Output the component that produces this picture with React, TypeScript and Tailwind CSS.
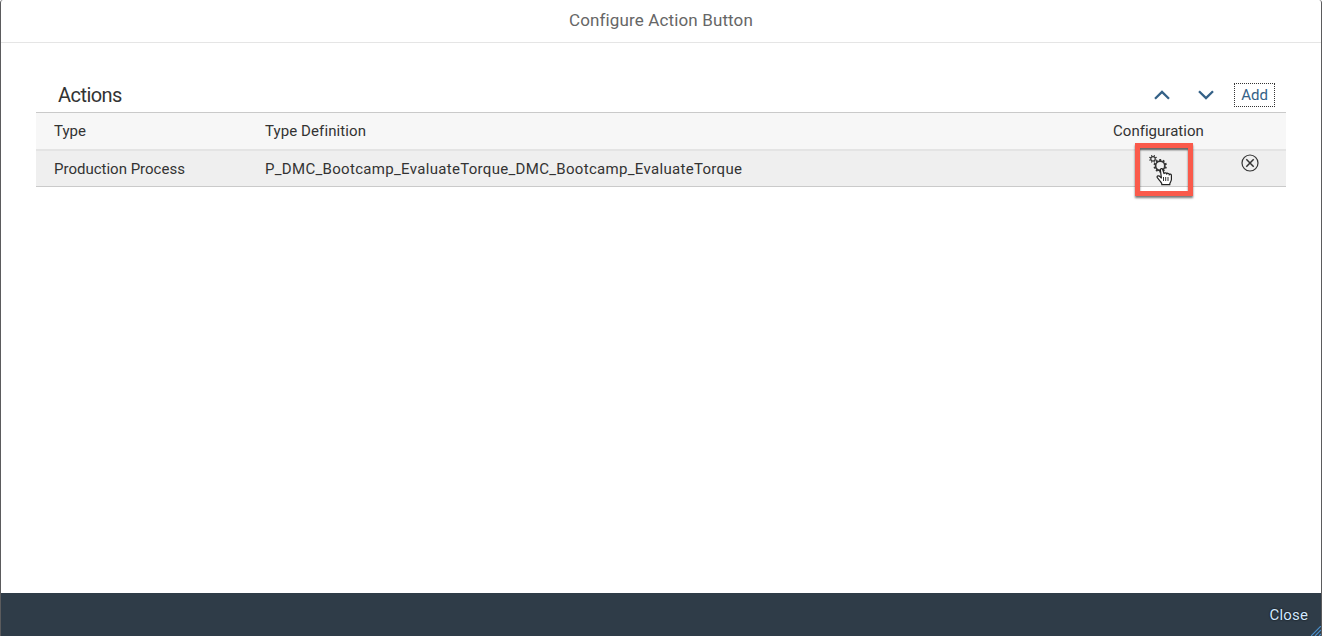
import React from "react";

const columns = "grid grid-cols-[211px_848px_124px_67px]";

function ChevronUp({ flip = false }: { flip?: boolean }) {
  return (
    <svg width="16" height="10" viewBox="0 0 16 10" fill="none" className={flip ? "rotate-180" : ""}>
      <path d="M1 8.7 8 1.9 15 8.7" stroke="#346187" strokeWidth="2.3" />
    </svg>
  );
}

function teeth(cx: number, cy: number, r1: number, r2: number, n: number) {
  const parts: string[] = [];
  for (let i = 0; i < n; i++) {
    const a = ((i + 0.5) / n) * Math.PI * 2;
    parts.push(
      `M${cx + r1 * Math.cos(a)} ${cy + r1 * Math.sin(a)}L${cx + r2 * Math.cos(a)} ${cy + r2 * Math.sin(a)}`
    );
  }
  return parts.join("");
}

function Gears() {
  return (
    <svg width="20" height="22" viewBox="0 0 20 22" fill="none" stroke="#333">
      <circle cx="5" cy="4.8" r="2.2" strokeWidth="1.1" />
      <path d={teeth(5, 4.8, 2.4, 4, 8)} strokeWidth="1.1" />
      <circle cx="12.2" cy="11.8" r="4.6" strokeWidth="1.7" />
      <path d={teeth(12.2, 11.8, 4.8, 6.7, 10)} strokeWidth="1.9" />
    </svg>
  );
}

function HandCursor() {
  return (
    <svg width="17" height="19" viewBox="0 0 17 19">
      <path
        d="M5.4 11 4.2 9.8C3.2 8.8 1.5 8.5 1.1 9.4c-.3.7.2 1.3.8 2l2.6 3.2c.6 1 1.3 1.5 1.3 2.4v.7h8v-.9c.2-1.2 1.5-2.5 1.6-4.3V8.4c0-1.5-2-1.6-2.2-.5V7.3c-.2-1.4-2.3-1.4-2.5-.2V6.700C10.400 5.500 8.200 5.500 8 6.600L6.700 2.500C6.300 1.200 4.200 1.500 4.400 3Z"
        fill="#fff"
        stroke="#222"
        strokeWidth="1.200"
        strokeLinejoin="round"
      />
      <path d="M7.500 10v4M9.700 10v4M12 10v4" stroke="#333" strokeWidth="1" />
    </svg>
  );
}

function Decline() {
  return (
    <svg width="18" height="18" viewBox="0 0 18 18" fill="none" stroke="#333" strokeWidth="1.200">
      <circle cx="9" cy="9" r="8" />
      <path d="m5.300 5.300 7.400 7.400m0-7.400-7.400 7.400" strokeWidth="1.500" />
    </svg>
  );
}

export default function App() {
  return (
    <div className="relative flex h-[636px] w-[1322px] flex-col overflow-hidden rounded-t-[3px] border-x border-[#5b5b5d] bg-white font-['Roboto','Liberation_Sans',sans-serif] text-[15px] text-[#333]">
      <header className="flex h-[43px] shrink-0 items-center justify-center border-b border-[#e5e5e5] pb-px text-[17px] text-[#666]">
        <h1 className="tracking-[0.130px]">Configure Action Button</h1>
      </header>

      <main className="flex-1 px-[35px] pt-[35px]">
        <div className="flex h-[34px] items-center pr-[11px] pl-[22px]">
          <h2 className="pb-px text-[20px] leading-6 tracking-[-0.550px]">Actions</h2>
          <div className="ml-auto flex items-center">
            <button aria-label="Move up" className="flex w-[44px] justify-center">
              <ChevronUp />
            </button>
            <button aria-label="Move down" className="flex w-[44px] justify-center">
              <ChevronUp flip />
            </button>
            <button className="ml-[6px] flex h-[24px] w-[41px] items-center justify-center border border-dotted border-[#333] text-[#346187]">
              Add
            </button>
          </div>
        </div>

        <div className="border-y border-[#cacaca]">
          <div className={`${columns} h-[38px] items-center border-b-2 border-[#e4e4e4] bg-[#f7f7f7] pl-[18px]`}>
            <span>Type</span>
            <span className="tracking-[0.100px]">Type Definition</span>
            <span className="tracking-[0.030px]">Configuration</span>
          </div>
          <div className={`${columns} h-[35px] items-center bg-[#efefef] pl-[18px]`}>
            <span className="pt-[2px]">Production Process</span>
            <span className="pt-[2px] tracking-[0.312px]">
              P_DMC_Bootcamp_EvaluateTorque_DMC_Bootcamp_EvaluateTorque
            </span>
            <button aria-label="Configure" className="self-start pt-[3px] pl-[35px]">
              <Gears />
            </button>
            <button aria-label="Delete" className="self-start pt-[3px] pl-[4px]">
              <Decline />
            </button>
          </div>
        </div>
      </main>

      <footer className="flex h-[43px] shrink-0 items-center justify-end bg-[#2f3c48] pt-[2px] pr-[13px] text-[#d1e8ff]">
        <button className="tracking-[0.150px] [text-shadow:0_0_2px_#000]">Close</button>
      </footer>

      <div className="absolute top-[143px] left-[1134px] h-[53px] w-[58px] border-[5px] border-[#fa5a4b] shadow-[0_2px_2px_#0008,inset_0_2px_2px_#0009]" />
      <div className="absolute top-[167px] left-[1155px]">
        <HandCursor />
      </div>
      <svg className="absolute right-0 bottom-0" width="10" height="10" viewBox="0 0 10 10" stroke="#4b8fca" strokeWidth="1.200">
        <path d="M0 10 10 0M4 10l6-6M8 10l2-2" />
      </svg>
      <svg className="absolute top-0 -left-px" width="1" height="636" viewBox="0 0 1 636" fill="none" stroke="#000">
        <path d="M.5 259v1M.5 262v1M.5 266v1M.5 291v11M.5 329v1M.5 364v1M.5 370v2M.5 508v9M.5 545v1M.5 551v2" />
        <path d="M.5 396v10" stroke="#2c2c2d" />
      </svg>
    </div>
  );
}
